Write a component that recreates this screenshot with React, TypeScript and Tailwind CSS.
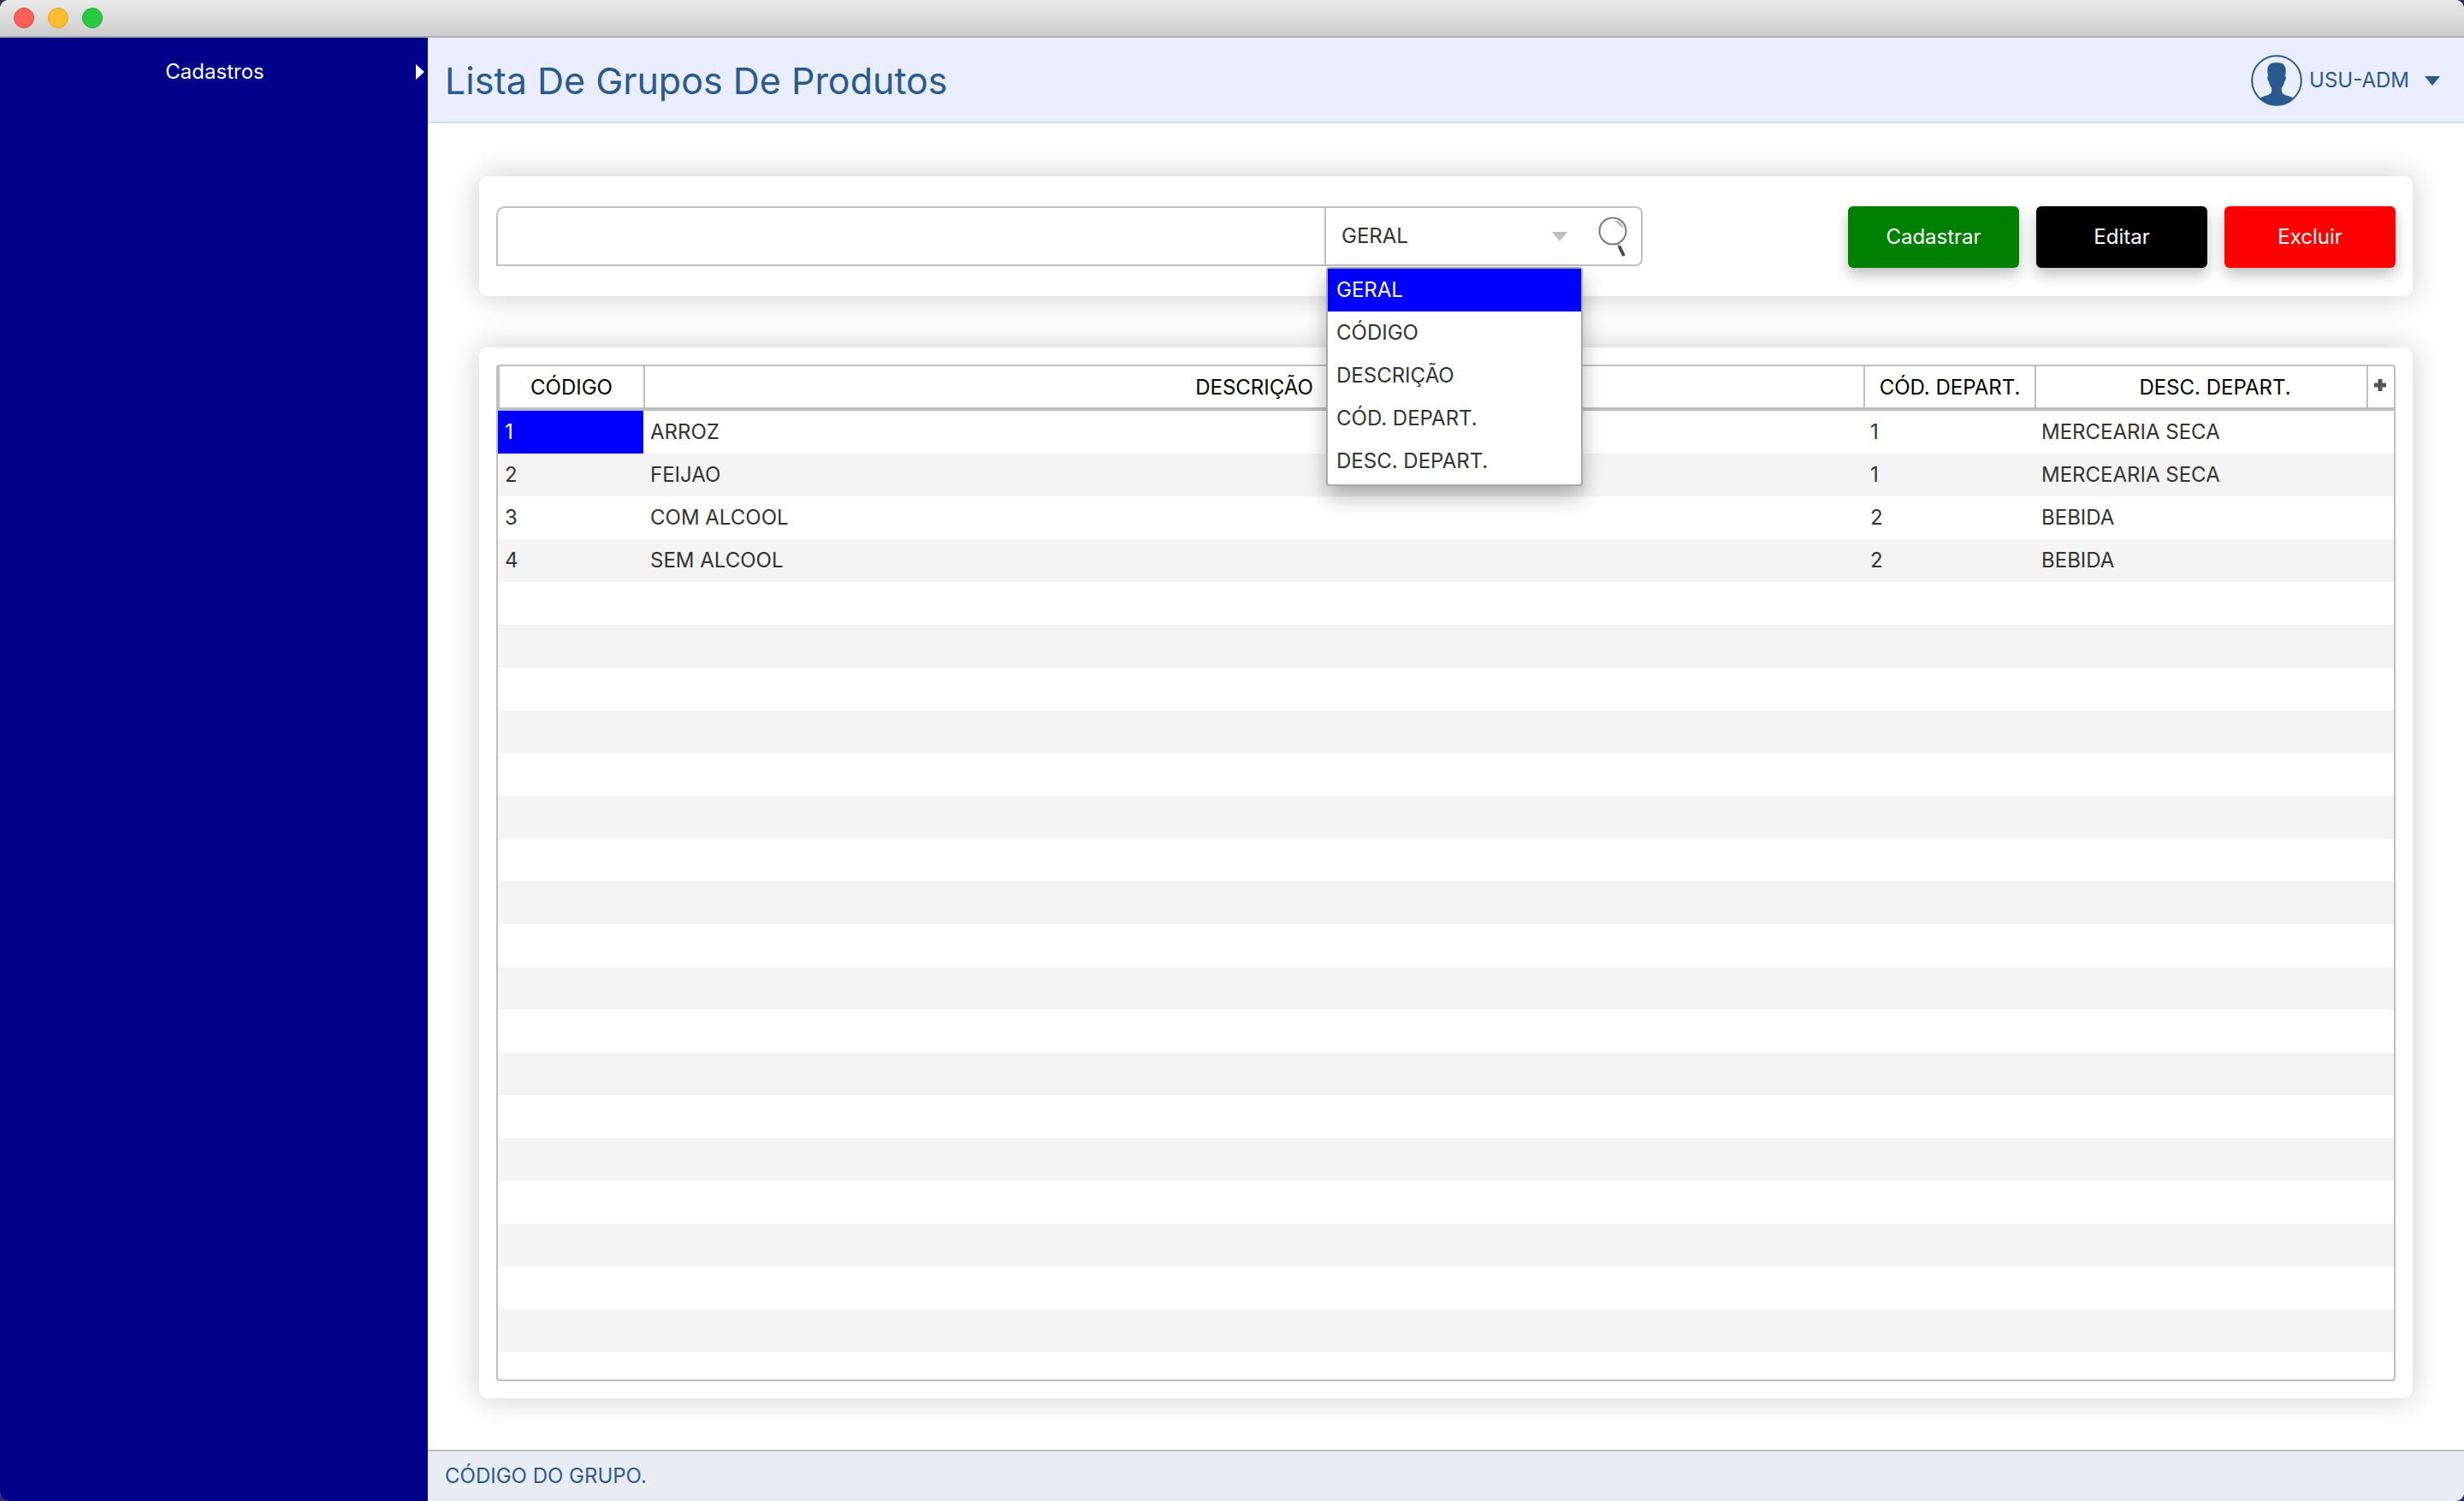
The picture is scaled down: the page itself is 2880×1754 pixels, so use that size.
const columns = [
  { label: 'CÓDIGO', size: 'w-[170px]' },
  { label: 'DESCRIÇÃO', size: 'w-auto' },
  { label: 'CÓD. DEPART.', size: 'w-[200px]' },
  { label: 'DESC. DEPART.', size: 'w-[388px] pl-8' },
];

const groups = [
  ['1', 'ARROZ', '1', 'MERCEARIA SECA'],
  ['2', 'FEIJAO', '1', 'MERCEARIA SECA'],
  ['3', 'COM ALCOOL', '2', 'BEBIDA'],
  ['4', 'SEM ALCOOL', '2', 'BEBIDA'],
];

const emptyRows = Array.from({ length: 18 }, (_, i) => i);

const filters = ['GERAL', 'CÓDIGO', 'DESCRIÇÃO', 'CÓD. DEPART.', 'DESC. DEPART.'];

const actions = [
  { label: 'Cadastrar', color: 'bg-[#008000]' },
  { label: 'Editar', color: 'bg-black' },
  { label: 'Excluir', color: 'bg-[#ff0000]' },
];

function TitleBar() {
  return (
    <div className="flex h-11 shrink-0 items-center gap-4 border-b-2 border-[#a9a9a9] bg-linear-to-b from-[#e9e9e9] to-[#cdcdcd] px-4">
      <button aria-label="Fechar" className="size-6 rounded-full border border-[#e2453f] bg-[#ff5f57]" />
      <button aria-label="Minimizar" className="size-6 rounded-full border border-[#dfa023] bg-[#ffbd2e]" />
      <button aria-label="Maximizar" className="size-6 rounded-full border border-[#1dad2b] bg-[#28ca41]" />
    </div>
  );
}

function Sidebar() {
  return (
    <nav className="w-[500px] shrink-0 bg-[#00008b] text-white">
      <button className="flex h-20 w-full items-center pr-1">
        <span className="flex-1 pl-4 text-center">Cadastros</span>
        <svg viewBox="0 0 10 18" className="h-[18px] w-[10px]" fill="currentColor">
          <path d="M0 0 10 9 0 18Z" />
        </svg>
      </button>
    </nav>
  );
}

function Avatar() {
  return (
    <svg viewBox="0 0 60 60" className="size-[60px]" fill="#29598f">
      <circle cx="30" cy="30" r="28.8" fill="none" stroke="#29598f" strokeWidth="2" />
      <path d="M30 9C22.500 9 19 12.500 19.300 19c0 2.500.5 4 .5 6-.9.800-.6 4.500 1 6.500.6 2.800 1.600 5 3.200 7 .4 2.500.3 4.500-.6 6C21 48 14.500 47.500 10.500 51a29 29 0 0 0 39 0C45.500 47.500 39 48 36.600 44.500c-.9-1.500-1-3.500-.6-6 1.600-2 2.600-4.200 3.200-7 1.600-2 1.900-5.700 1-6.500 0-2 .5-3.500.5-6C41 12.500 37.500 9 30 9Z" />
    </svg>
  );
}

function Header() {
  return (
    <header className="flex h-[100px] shrink-0 items-center justify-between border-b-2 border-[#d5dcf5] bg-[#e9edfc] pt-0.5 pr-7 pl-5 text-[#29598f]">
      <h1 className="text-[43px] leading-[52px]">Lista De Grupos De Produtos</h1>
      <button className="flex items-center">
        <Avatar />
        <span className="pr-[18px] pl-2">USU-ADM</span>
        <svg viewBox="0 0 18 11" className="h-[11px] w-[18px]" fill="currentColor">
          <path d="M0 0H18L9 11Z" />
        </svg>
      </button>
    </header>
  );
}

function Magnifier() {
  return (
    <svg viewBox="0 0 36 50" className="h-[50px] w-9" fill="none">
      <circle cx="18" cy="18" r="15.500" stroke="#7a7a7a" strokeWidth="2" />
      <path d="M20 6c5 .5 9 4 10 9M23 7.500l5 5" stroke="#bcbcbc" strokeWidth="1.500" />
      <path d="M23.500 32.500l1.500 3" stroke="#8a8a8a" strokeWidth="2" />
      <path d="M25.500 35.500l5.500 11.500" stroke="#4a4a4a" strokeWidth="4" />
    </svg>
  );
}

function FilterSelect() {
  return (
    <div className="relative flex w-[300px] items-center border-l-2 border-[#bfbfbf]">
      <select aria-label="Filtro" className="h-full w-full appearance-none bg-transparent pl-[18px] text-[#333333] outline-none">
        {filters.map((f) => (
          <option key={f}>{f}</option>
        ))}
      </select>
      <svg viewBox="0 0 18 11" className="pointer-events-none absolute right-4 h-[11px] w-[18px]" fill="#bfbfbf">
        <path d="M0 0H18L9 11Z" />
      </svg>
      <ul
        role="listbox"
        className="absolute top-[69px] left-0 z-10 w-[300px] rounded-sm border-2 border-[#a9a9a9] bg-white pb-0.5 text-[#333333] shadow-[0_12px_24px_rgba(0,0,0,0.3)]"
      >
        {filters.map((f, i) => (
          <li
            key={f}
            role="option"
            aria-selected={i === 0}
            className="flex h-[50px] items-center pl-[10px] aria-selected:bg-[#0000ff] aria-selected:text-white"
          >
            {f}
          </li>
        ))}
      </ul>
    </div>
  );
}

function Toolbar() {
  return (
    <section className="flex h-[140px] shrink-0 items-center justify-between rounded-[10px] bg-white px-5 shadow-[0_0_36px_rgba(0,0,0,0.2)]">
      <div className="flex h-[70px] w-[1340px] rounded-r-[8px] rounded-tl-[10px] border-2 border-[#bfbfbf]">
        <input aria-label="Pesquisar" className="min-w-0 flex-1 bg-transparent px-4 outline-none" />
        <FilterSelect />
        <button aria-label="Buscar" className="flex w-[70px] items-center justify-center pt-0.5 pl-1">
          <Magnifier />
        </button>
      </div>
      <div className="flex gap-5 pt-0.5">
        {actions.map((a) => (
          <button
            key={a.label}
            className={`h-[72px] w-[200px] rounded-md text-white shadow-[0_8px_16px_rgba(0,0,0,0.25)] ${a.color}`}
          >
            {a.label}
          </button>
        ))}
      </div>
    </section>
  );
}

function GroupsTable() {
  return (
    <section className="flex flex-1 flex-col rounded-[10px] bg-white p-5 shadow-[0_0_36px_rgba(0,0,0,0.2)]">
      <div className="flex-1 rounded-sm border-2 border-[#bfbfbf]">
        <table className="w-full table-fixed border-separate border-spacing-0 text-[#333333]">
          <thead>
            <tr className="h-[52px] text-black">
              {columns.map((c) => (
                <th key={c.label} className={`border-b-4 border-l-2 border-[#bfbfbf] p-0 pt-0.5 font-normal ${c.size}`}>
                  {c.label}
                </th>
              ))}
              <th className="w-8 border-b-4 border-l-2 border-[#bfbfbf] p-0">
                <button aria-label="Colunas" className="flex w-full justify-center pr-0.5 pb-1">
                  <svg viewBox="0 0 14 14" className="size-[14px]" fill="none" stroke="#555555" strokeWidth="5">
                    <path d="M7 0V14M0 7H14" />
                  </svg>
                </button>
              </th>
            </tr>
          </thead>
          <tbody>
            {groups.map((row, r) => (
              <tr key={row[0]} className="h-[50px] even:bg-[#f4f4f4]">
                {row.map((cell, c) => (
                  <td key={c} className={r === 0 && c === 0 ? 'bg-[#0000ff] p-0 pl-2 text-white' : 'p-0 pl-2'}>
                    {cell}
                  </td>
                ))}
                <td className="p-0" />
              </tr>
            ))}
            {emptyRows.map((r) => (
              <tr key={r} className="h-[50px] even:bg-[#f4f4f4]">
                <td colSpan={5} className="p-0" />
              </tr>
            ))}
          </tbody>
        </table>
      </div>
    </section>
  );
}

export default function App() {
  return (
    <div className="min-h-screen bg-[#2d2c5c]">
      <div className="flex min-h-screen flex-col overflow-hidden rounded-[10px] bg-white font-['Inter',sans-serif] text-2xl leading-8">
        <TitleBar />
        <div className="flex flex-1">
          <Sidebar />
          <div className="flex min-w-0 flex-1 flex-col">
            <Header />
            <main className="flex flex-1 flex-col gap-[60px] px-[60px] pt-[62px] pb-[60px]">
              <Toolbar />
              <GroupsTable />
            </main>
            <footer className="flex h-[60px] shrink-0 items-center border-t-2 border-[#bfbfbf] bg-[#e9edf3] pl-5 text-[#29598f]">
              CÓDIGO DO GRUPO.
            </footer>
          </div>
        </div>
      </div>
    </div>
  );
}
